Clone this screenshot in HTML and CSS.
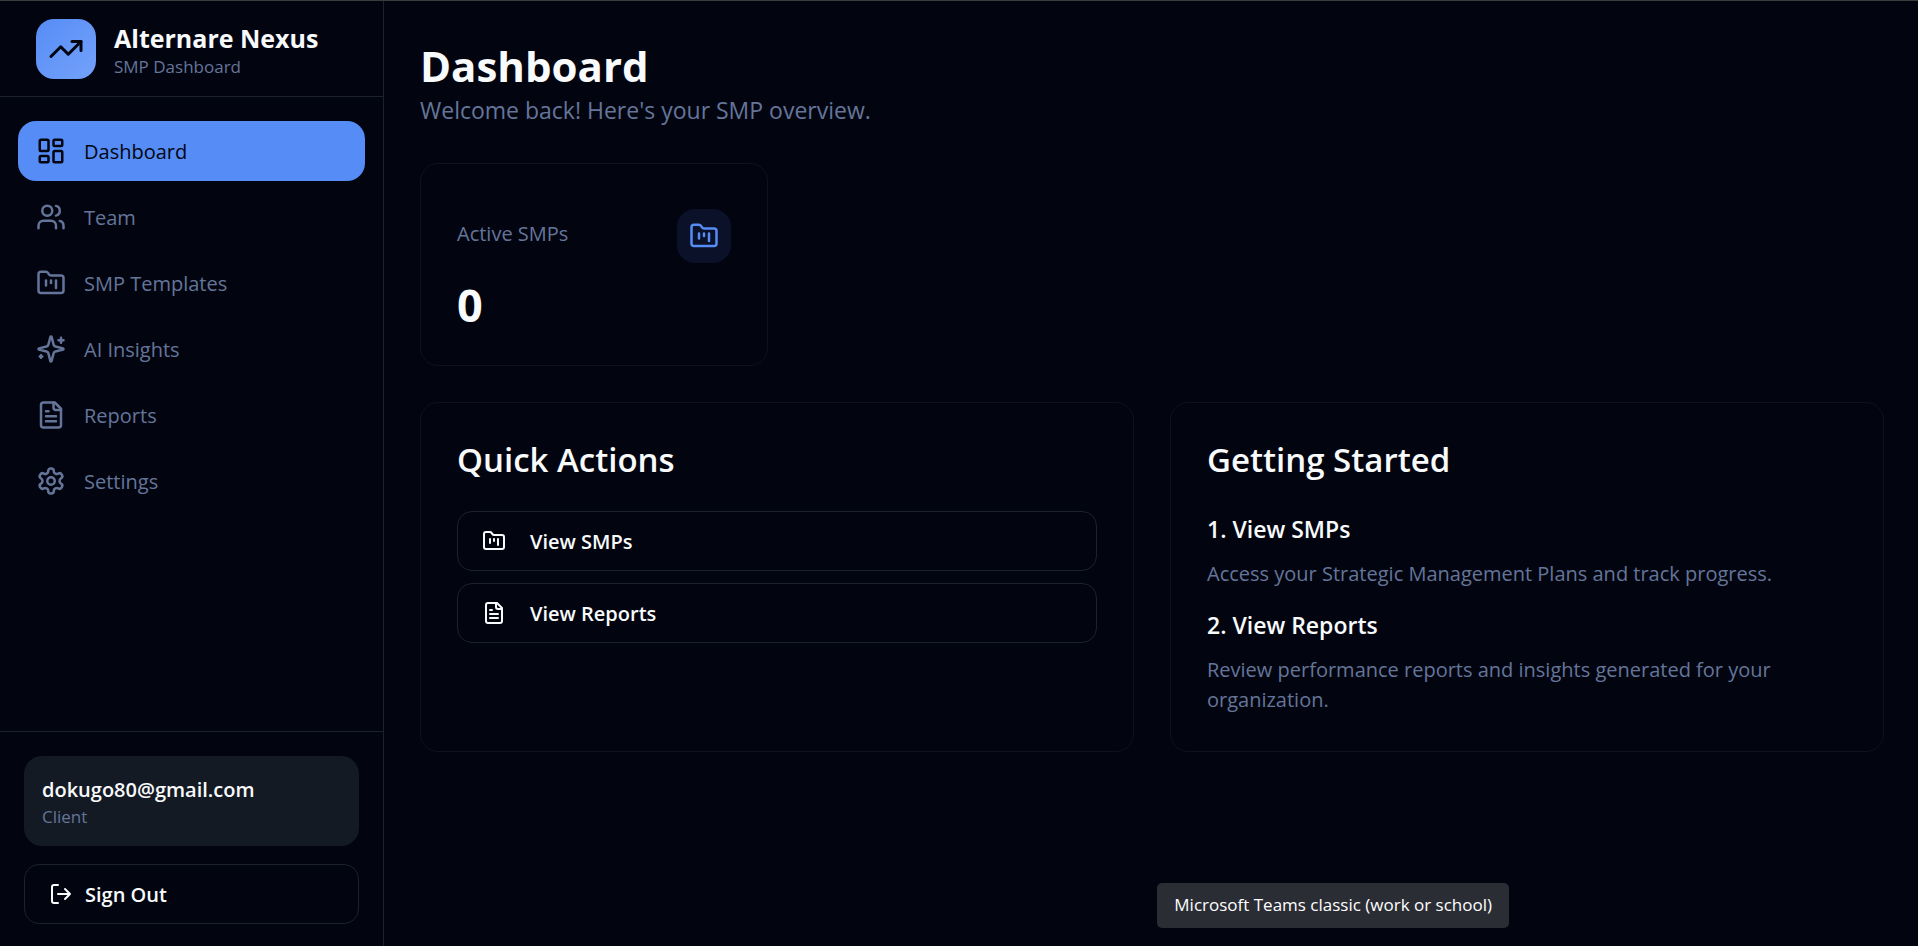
FILE: index.html
```html
<!DOCTYPE html>
<html lang="en">
<head>
    <meta charset="UTF-8">
    <meta name="viewport" content="width=device-width, initial-scale=1.0">
    <title>Alternare Nexus - SMP Dashboard</title>
    <link rel="stylesheet" href="styles.css">
</head>
<body>
    <!-- shared icons -->
    <svg class="icon-defs" aria-hidden="true">
        <symbol id="icon-folder" viewBox="0 0 24 24">
            <path d="M4 20h16a2 2 0 0 0 2-2V8a2 2 0 0 0-2-2h-7.93a2 2 0 0 1-1.66-.9l-.82-1.2A2 2 0 0 0 7.93 3H4a2 2 0 0 0-2 2v13c0 1.1.9 2 2 2Z"/>
            <path d="M8 10v4M12 10v2M16 10v6"/>
        </symbol>
        <symbol id="icon-report" viewBox="0 0 24 24">
            <path d="M15 2H6a2 2 0 0 0-2 2v16a2 2 0 0 0 2 2h12a2 2 0 0 0 2-2V7Z"/>
            <path d="M14 2v4a2 2 0 0 0 2 2h4M10 9H8M16 13H8M16 17H8"/>
        </symbol>
    </svg>

    <div class="app">
        <aside class="sidebar">
            <header class="brand">
                <div class="brand-logo">
                    <svg class="icon" viewBox="0 0 24 24"><path d="M22 7l-8.5 8.5-5-5L2 17"/><path d="M16 7h6v6"/></svg>
                </div>
                <div>
                    <div class="brand-name">Alternare Nexus</div>
                    <div class="brand-sub">SMP Dashboard</div>
                </div>
            </header>

            <nav class="nav">
                <a href="#" class="nav-link active">
                    <svg class="icon" viewBox="0 0 24 24"><rect x="3" y="3" width="7" height="9" rx="1"/><rect x="14" y="3" width="7" height="5" rx="1"/><rect x="14" y="12" width="7" height="9" rx="1"/><rect x="3" y="16" width="7" height="5" rx="1"/></svg>
                    <span>Dashboard</span>
                </a>
                <a href="#" class="nav-link">
                    <svg class="icon" viewBox="0 0 24 24"><path d="M16 21v-2a4 4 0 0 0-4-4H6a4 4 0 0 0-4 4v2"/><circle cx="9" cy="7" r="4"/><path d="M22 21v-2a4 4 0 0 0-3-3.87M16 3.13a4 4 0 0 1 0 7.75"/></svg>
                    <span>Team</span>
                </a>
                <a href="#" class="nav-link">
                    <svg class="icon"><use href="#icon-folder"/></svg>
                    <span>SMP Templates</span>
                </a>
                <a href="#" class="nav-link">
                    <svg class="icon" viewBox="0 0 24 24"><path d="M9.937 15.5A2 2 0 0 0 8.5 14.063l-6.135-1.582a.5.5 0 0 1 0-.962L8.5 9.936A2 2 0 0 0 9.937 8.5l1.582-6.135a.5.5 0 0 1 .963 0L14.063 8.5A2 2 0 0 0 15.5 9.937l6.135 1.581a.5.5 0 0 1 0 .964L15.5 14.063a2 2 0 0 0-1.437 1.437l-1.582 6.135a.5.5 0 0 1-.963 0z"/><path d="M20 3v4M22 5h-4M4 17v2M5 18H3"/></svg>
                    <span>AI Insights</span>
                </a>
                <a href="#" class="nav-link">
                    <svg class="icon"><use href="#icon-report"/></svg>
                    <span>Reports</span>
                </a>
                <a href="#" class="nav-link">
                    <svg class="icon" viewBox="0 0 24 24"><path d="M12.22 2h-.44a2 2 0 0 0-2 2v.18a2 2 0 0 1-1 1.73l-.43.25a2 2 0 0 1-2 0l-.15-.08a2 2 0 0 0-2.73.73l-.22.38a2 2 0 0 0 .73 2.73l.15.1a2 2 0 0 1 1 1.72v.51a2 2 0 0 1-1 1.74l-.15.09a2 2 0 0 0-.73 2.73l.22.38a2 2 0 0 0 2.73.73l.15-.08a2 2 0 0 1 2 0l.43.25a2 2 0 0 1 1 1.73V20a2 2 0 0 0 2 2h.44a2 2 0 0 0 2-2v-.18a2 2 0 0 1 1-1.73l.43-.25a2 2 0 0 1 2 0l.15.08a2 2 0 0 0 2.73-.73l.22-.39a2 2 0 0 0-.73-2.73l-.15-.08a2 2 0 0 1-1-1.74v-.5a2 2 0 0 1 1-1.74l.15-.09a2 2 0 0 0 .73-2.73l-.22-.38a2 2 0 0 0-2.73-.73l-.15.08a2 2 0 0 1-2 0l-.43-.25a2 2 0 0 1-1-1.73V4a2 2 0 0 0-2-2z"/><circle cx="12" cy="12" r="3"/></svg>
                    <span>Settings</span>
                </a>
            </nav>

            <footer class="account">
                <div class="account-card">
                    <div class="account-email">dokugo80@gmail.com</div>
                    <div class="account-role">Client</div>
                </div>
                <button type="button" class="btn btn-signout">
                    <svg class="icon" viewBox="0 0 24 24"><path d="M9 21H5a2 2 0 0 1-2-2V5a2 2 0 0 1 2-2h4M16 17l5-5-5-5M21 12H9"/></svg>
                    <span>Sign Out</span>
                </button>
            </footer>
        </aside>

        <main class="main">
            <header class="page-header">
                <h1>Dashboard</h1>
                <p>Welcome back! Here's your SMP overview.</p>
            </header>

            <section class="stats">
                <div class="card stat">
                    <div class="stat-top">
                        <span class="stat-label">Active SMPs</span>
                        <span class="stat-icon"><svg class="icon"><use href="#icon-folder"/></svg></span>
                    </div>
                    <div class="stat-value">0</div>
                </div>
            </section>

            <section class="panels">
                <div class="card">
                    <h2>Quick Actions</h2>
                    <div class="actions">
                        <button type="button" class="btn btn-action">
                            <svg class="icon"><use href="#icon-folder"/></svg>
                            <span>View SMPs</span>
                        </button>
                        <button type="button" class="btn btn-action">
                            <svg class="icon"><use href="#icon-report"/></svg>
                            <span>View Reports</span>
                        </button>
                    </div>
                </div>
                <div class="card">
                    <h2>Getting Started</h2>
                    <div class="steps">
                        <div class="step">
                            <h3>1. View SMPs</h3>
                            <p>Access your Strategic Management Plans and track progress.</p>
                        </div>
                        <div class="step">
                            <h3>2. View Reports</h3>
                            <p>Review performance reports and insights generated for your organization.</p>
                        </div>
                    </div>
                </div>
            </section>
        </main>
    </div>

    <div class="tooltip" role="tooltip">Microsoft Teams classic (work or school)</div>
</body>
</html>
```
FILE: styles.css
```css
* {
    box-sizing: border-box;
}
body {
    margin: 0;
    background-color: #020510;
    color: #f8fafc;
    font-family: "Open Sans", "Noto Sans", sans-serif;
    font-size: 20px;
    line-height: 30px;
}
h1, h2, h3, p {
    margin: 0;
}
.icon-defs {
    display: none;
}
.icon {
    width: 30px;
    height: 30px;
    flex-shrink: 0;
    fill: none;
    stroke: currentColor;
    stroke-width: 2;
    stroke-linecap: round;
    stroke-linejoin: round;
}
.app {
    display: flex;
    min-height: 100vh;
    border-top: 1px solid #3b3b3b;
}

/* Sidebar */
.sidebar {
    display: flex;
    flex-direction: column;
    width: 384px;
    flex-shrink: 0;
    border-right: 1px solid #1c222d;
}
.brand {
    display: flex;
    align-items: center;
    gap: 18px;
    padding: 18px 36px 17px;
    border-bottom: 1px solid #1c222d;
}
.brand-logo {
    display: flex;
    align-items: center;
    justify-content: center;
    width: 60px;
    height: 60px;
    border-radius: 18px;
    background: linear-gradient(135deg, #568cf5, #74a2fb);
    color: #020510;
}
.brand-logo .icon {
    width: 36px;
    height: 36px;
}
.brand-name {
    padding-top: 3px;
    font-size: 25px;
    font-weight: 700;
    line-height: 33px;
}
.brand-sub, .account-role {
    color: #65759a;
    font-size: 17px;
    line-height: 24px;
}
.nav {
    display: flex;
    flex-direction: column;
    flex: 1;
    gap: 6px;
    padding: 24px 18px;
}
.nav-link {
    display: flex;
    align-items: center;
    gap: 18px;
    height: 60px;
    padding: 0 18px;
    border-radius: 18px;
    color: #65759a;
    font-weight: 500;
    text-decoration: none;
}
.nav-link span, .btn span {
    padding-top: 2px;
}
.nav-link.active {
    background-color: #568cf5;
    color: #020510;
}
.account {
    display: flex;
    flex-direction: column;
    gap: 18px;
    padding: 24px 24px 22px;
    border-top: 1px solid #1c222d;
}
.account-card {
    padding: 19px 18px 17px;
    border-radius: 18px;
    background-color: #141a23;
}
.account-email {
    font-weight: 600;
}
.btn {
    display: flex;
    align-items: center;
    width: 100%;
    height: 60px;
    padding: 0 24px;
    border: 1px solid #1c222d;
    border-radius: 15px;
    background: none;
    color: #f8fafc;
    font: inherit;
    font-weight: 600;
    cursor: pointer;
}
.btn .icon {
    width: 24px;
    height: 24px;
}
.btn-signout {
    gap: 12px;
}
.btn-action {
    gap: 24px;
}

/* Main content */
.main {
    flex: 1;
    padding: 39px 34px 36px 36px;
}
.page-header {
    margin-bottom: 35px;
}
.page-header h1 {
    font-size: 42px;
    font-weight: 700;
    line-height: 52px;
}
.page-header p {
    color: #65759a;
    font-size: 23px;
    line-height: 36px;
}
.card {
    padding: 36px;
    border: 1px solid #0d121d;
    border-radius: 18px;
}
.stats {
    display: grid;
    grid-template-columns: repeat(4, 1fr);
    gap: 24px;
    margin-bottom: 36px;
}
.stat {
    padding: 45px 36px 33px;
}
.stat-top {
    display: flex;
    justify-content: space-between;
}
.stat-label {
    color: #65759a;
    font-weight: 500;
    line-height: 50px;
}
.stat-icon {
    display: flex;
    align-items: center;
    justify-content: center;
    width: 54px;
    height: 54px;
    border-radius: 18px;
    background-color: #0a1128;
    color: #568cf5;
}
.stat-value {
    margin-top: 15px;
    font-size: 45px;
    font-weight: 700;
    line-height: 54px;
}
.panels {
    display: grid;
    grid-template-columns: 1fr 1fr;
    gap: 36px;
}
.card h2 {
    margin-bottom: 30px;
    font-size: 33px;
    font-weight: 600;
    line-height: 42px;
}
.actions {
    display: flex;
    flex-direction: column;
    gap: 12px;
}
.steps {
    display: flex;
    flex-direction: column;
    gap: 18px;
}
.step h3 {
    margin-bottom: 12px;
    font-size: 23px;
    font-weight: 600;
    line-height: 36px;
}
.step p {
    color: #65759a;
}

/* Tooltip floating over the page */
.tooltip {
    position: fixed;
    right: 409px;
    bottom: 18px;
    padding: 7px 17px 8px;
    border-radius: 5px;
    background-color: #2b2d35;
    color: #ffffff;
    font-size: 17px;
    white-space: nowrap;
}
```
